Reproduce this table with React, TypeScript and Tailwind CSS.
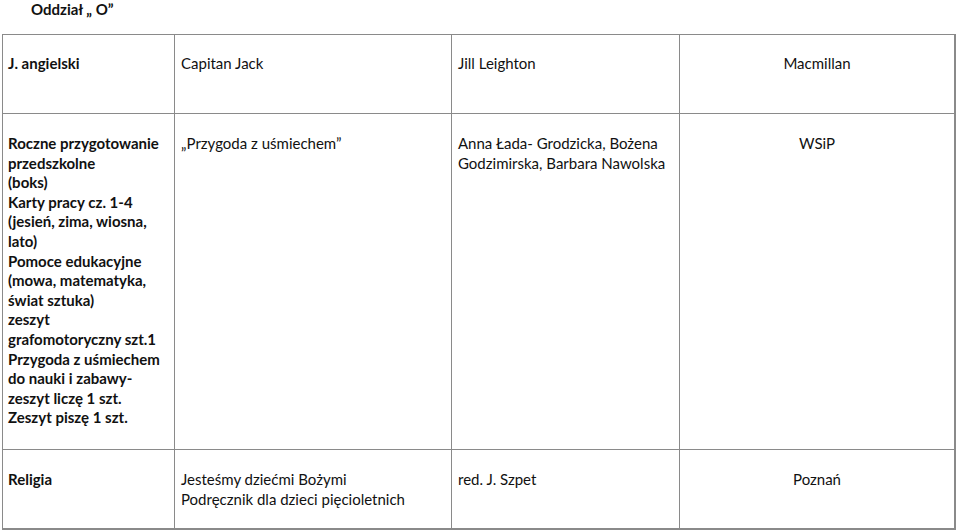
import React from 'react';

type Cell = { lines: string[]; bold?: boolean; center?: boolean };

const cols = ['w-[172px]', 'w-[277px]', 'w-[228px]', 'w-[274px]'];

const rows: { height: string; pad: string; cells: Cell[] }[] = [
  {
    height: 'h-[79px]',
    pad: 'pt-[19px]',
    cells: [
      { lines: ['J. angielski'], bold: true },
      { lines: ['Capitan Jack'] },
      { lines: ['Jill Leighton'] },
      { lines: ['Macmillan'], center: true },
    ],
  },
  {
    height: 'h-[336px]',
    pad: 'pt-[20px]',
    cells: [
      {
        bold: true,
        lines: [
          'Roczne przygotowanie',
          'przedszkolne',
          '(boks)',
          'Karty pracy cz. 1-4',
          '(jesień, zima, wiosna,',
          'lato)',
          'Pomoce edukacyjne',
          '(mowa, matematyka,',
          'świat sztuka)',
          'zeszyt',
          'grafomotoryczny szt.1',
          'Przygoda z uśmiechem',
          'do nauki i zabawy-',
          'zeszyt liczę 1 szt.',
          'Zeszyt piszę 1 szt.',
        ],
      },
      { lines: ['„Przygoda z uśmiechem”'] },
      { lines: ['Anna Łada- Grodzicka, Bożena', 'Godzimirska, Barbara Nawolska'] },
      { lines: ['WSiP'], center: true },
    ],
  },
  {
    height: 'h-[78px]',
    pad: 'pt-[20px]',
    cells: [
      { lines: ['Religia'], bold: true },
      { lines: ['Jesteśmy dziećmi Bożymi', 'Podręcznik dla dzieci pięcioletnich'] },
      { lines: ['red. J. Szpet'] },
      { lines: ['Poznań'], center: true },
    ],
  },
];

export default function App() {
  return (
    <div className="w-[959px] h-[530px] bg-white text-[#111] font-['Lato',sans-serif] text-[15px] leading-[19.6px] overflow-hidden">
      <div className="h-[34px] pl-[31px] pt-[1px] font-bold leading-[17px]">Oddział „ O”</div>
      <div className="ml-[2px] w-[954px] border-l border-t border-r-2 border-b-2 border-[#8a8a8a]">
        {rows.map((row, ri) => (
          <div key={ri} className={`flex ${row.height} ${ri < rows.length - 1 ? 'border-b border-[#8a8a8a]' : ''}`}>
            {row.cells.map((cell, ci) => (
              <div
                key={ci}
                className={`${cols[ci]} shrink-0 ${row.pad} ${ci < 3 ? 'border-r border-[#8a8a8a]' : ''} ${
                  cell.center ? 'text-center' : ci === 0 ? 'pl-[5px]' : 'pl-[6px]'
                } ${cell.bold ? 'font-bold' : ''}`}
              >
                {cell.lines.map((l, li) => (
                  <div key={li} className="whitespace-nowrap">
                    {l}
                  </div>
                ))}
              </div>
            ))}
          </div>
        ))}
      </div>
    </div>
  );
}
